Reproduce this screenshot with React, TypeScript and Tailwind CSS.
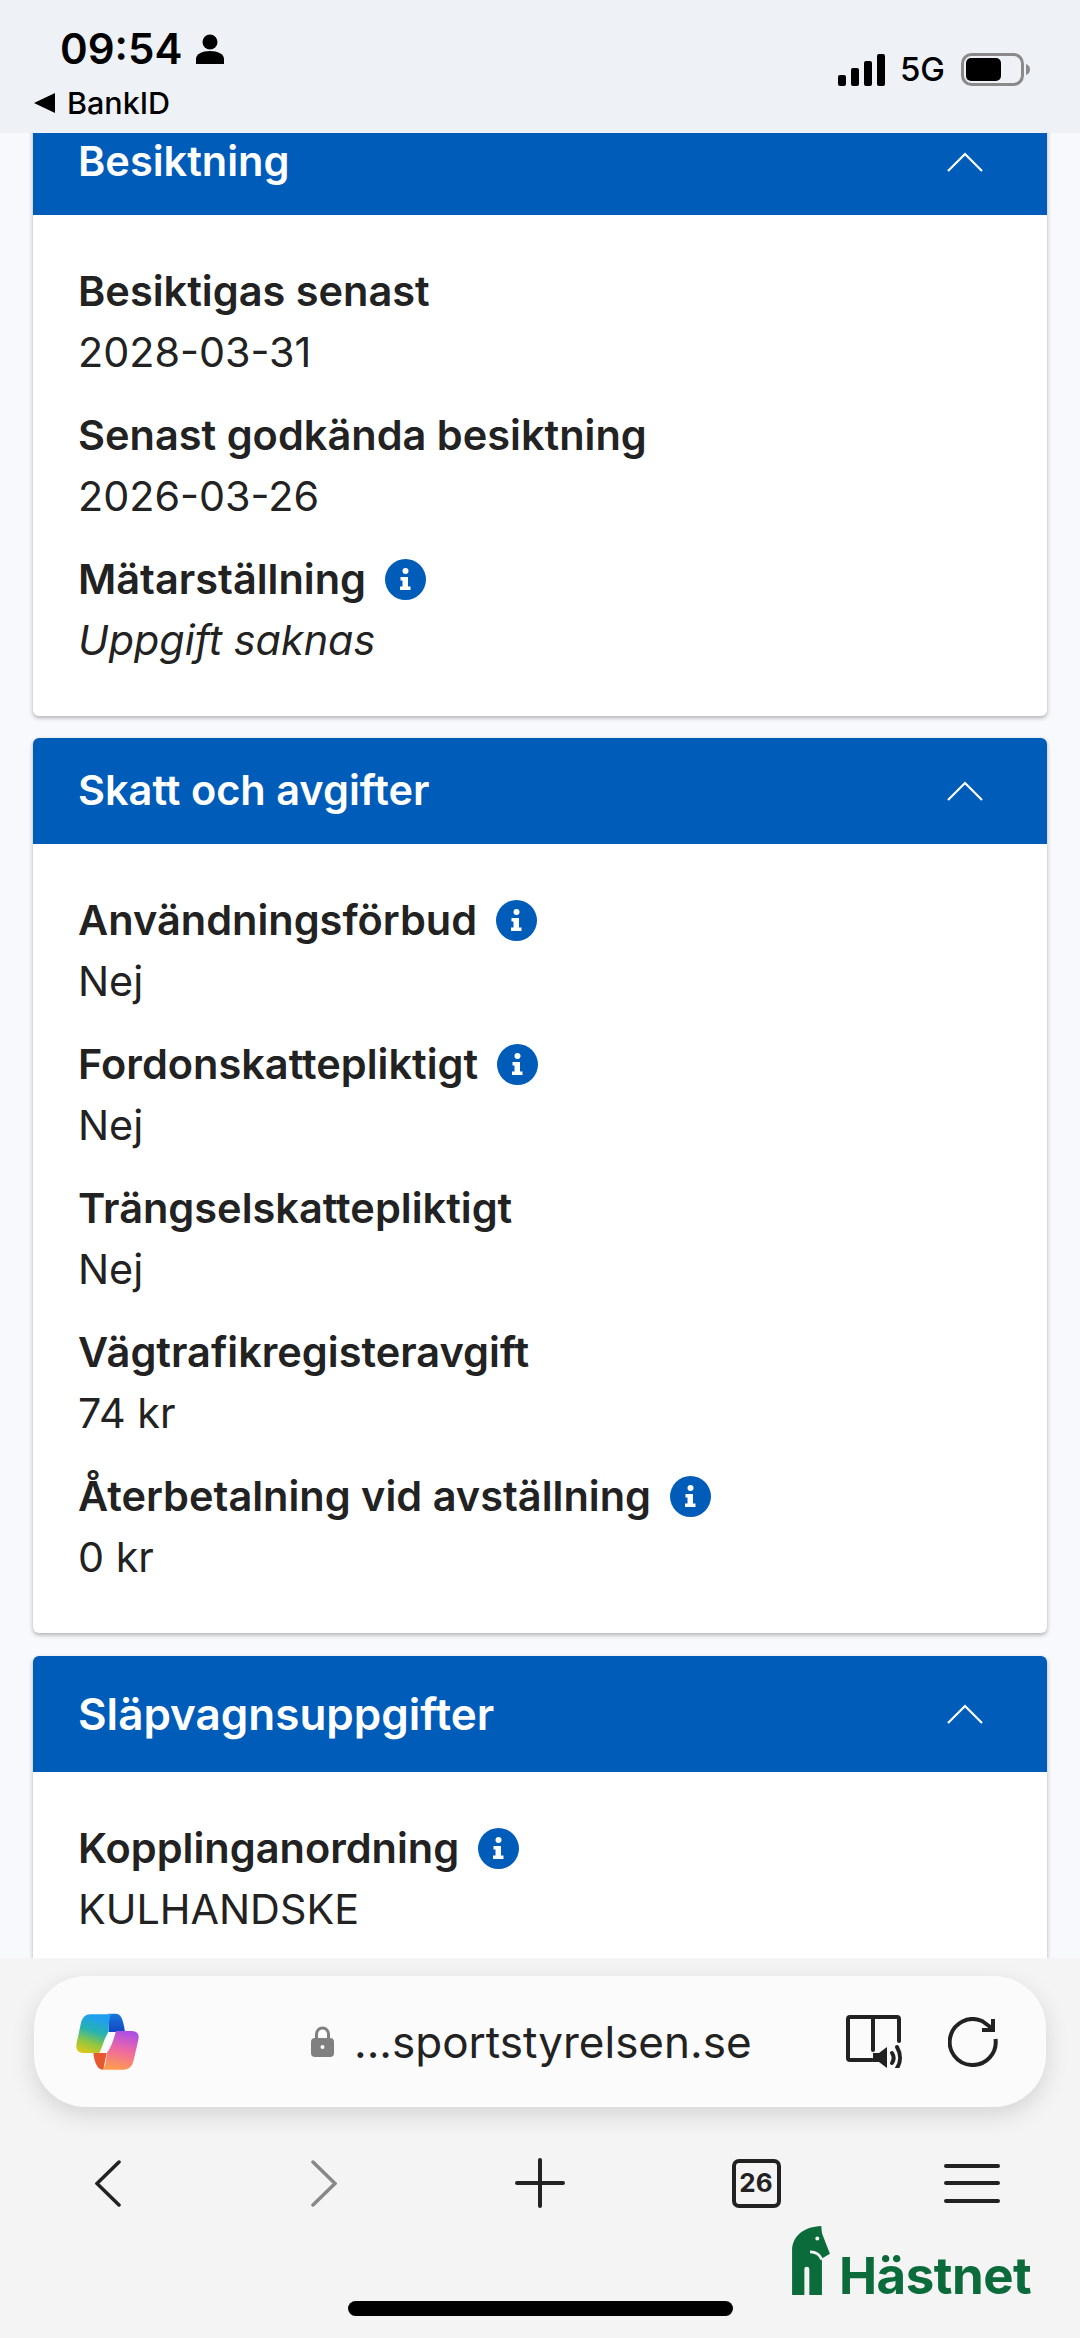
import { type ReactNode } from "react";

const FONT = "[font-family:Inter,'Noto_Sans',sans-serif]";

function InfoIcon() {
  return (
    <svg viewBox="0 0 41 41" className="w-[41px] h-[41px] shrink-0">
      <circle cx="20.5" cy="20.5" r="20.5" fill="#005cb9" />
      <circle cx="20.5" cy="12" r="3" fill="#fff" />
      <path d="M15.5 18h7.5v9.5h2.5v3.5h-10.500v-3.500h2.500v-6h-2z" fill="#fff" />
    </svg>
  );
}

function Chevron() {
  return (
    <svg viewBox="0 0 36 20" className="w-[36px] h-[20px]" fill="none" stroke="#fff" strokeWidth="2.200">
      <path d="M1 19 18 2l17 17" />
    </svg>
  );
}

type Row = { label: string; value: string; info?: boolean; italic?: boolean };

function Card({ title, rows, headerClass, titleClass, className }: { title: string; rows: Row[]; headerClass: string; titleClass: string; className?: string }) {
  return (
    <section className={`mx-[33px] bg-white rounded-[6px] overflow-hidden shadow-[0_2px_4px_rgba(0,0,0,0.3)] ${className ?? ""}`}>
      <header className={`bg-[#005cb9] pl-[45px] pr-[64px] flex items-center justify-between ${headerClass}`}>
        <h2 className={`text-white font-semibold leading-none ${titleClass}`}>{title}</h2>
        <Chevron />
      </header>
      <div className="px-[45px] pt-[46px] pb-[45px] flex flex-col gap-[22px]">
        {rows.map((r) => (
          <div key={r.label}>
            <div className="flex items-center gap-[19px] h-[61px]">
              <span className="text-[#222] text-[41.500px] font-semibold">{r.label}</span>
              {r.info && <InfoIcon />}
            </div>
            <div className={`h-[61px] leading-[61px] text-[#222] text-[41.300px] ${r.italic ? "italic" : ""}`}>{r.value}</div>
          </div>
        ))}
      </div>
    </section>
  );
}

function StatusBar() {
  return (
    <div className="h-[133px] shrink-0 bg-[#eef1f5] flex justify-between pl-[34px] pr-[50px] z-10 relative">
      <div>
        <div className="flex items-center gap-[14px] pl-[26px] pt-[8px] h-[90px]">
          <span className="text-[42px] font-semibold leading-none text-black">09:54</span>
          <svg viewBox="0 0 28 30" className="w-[28px] h-[30px]" fill="#000">
            <circle cx="14" cy="8" r="7.500" />
            <path d="M0 30v-5c0-5 6-8 14-8s14 3 14 8v5z" />
          </svg>
        </div>
        <div className="flex items-center gap-[12px] -mt-[2px]">
          <svg viewBox="0 0 21 20" className="w-[21px] h-[20px]" fill="#000"><path d="M21 0v20L0 10z" /></svg>
          <span className="text-[30.500px] font-medium leading-none text-black">BankID</span>
        </div>
      </div>
      <div className="flex items-center gap-[14px] pt-[3px] h-[136px]">
        <svg viewBox="0 0 48 32" className="w-[48px] h-[32px]" fill="#000">
          <rect x="0" y="21" width="8" height="11" rx="2" />
          <rect x="13" y="14" width="8" height="18" rx="2" />
          <rect x="26" y="7" width="8" height="25" rx="2" />
          <rect x="39" y="0" width="8" height="32" rx="2" />
        </svg>
        <span className="text-[33px] font-medium leading-none text-black">5G</span>
        <svg viewBox="0 0 69 33" className="w-[69px] h-[33px] ml-[2px]">
          <rect x="1.500" y="1.500" width="60" height="30" rx="9" fill="none" stroke="#8a8a8a" strokeWidth="3" />
          <rect x="5" y="5" width="35" height="23" rx="5" fill="#000" />
          <path d="M65 11c3 1 4 3 4 5.500s-1 4.500-4 5.500z" fill="#8a8a8a" />
        </svg>
      </div>
    </div>
  );
}

function CopilotLogo() {
  return (
    <svg viewBox="108 98 192 174" className="w-[64px] h-[58px]">
      <defs>
        <linearGradient id="cpLeft" x1="0.3" y1="0" x2="0" y2="1">
          <stop offset="0" stopColor="#1f9fee" />
          <stop offset="0.35" stopColor="#27b3b0" />
          <stop offset="0.65" stopColor="#8fc642" />
          <stop offset="1" stopColor="#efc812" />
        </linearGradient>
        <linearGradient id="cpRight" x1="0.6" y1="0" x2="0.4" y2="1">
          <stop offset="0" stopColor="#ac4ee6" />
          <stop offset="0.5" stopColor="#ef6aa0" />
          <stop offset="1" stopColor="#ff9b4e" />
        </linearGradient>
        <linearGradient id="cpTop" x1="0" y1="0" x2="0" y2="1">
          <stop offset="0" stopColor="#1a75dc" />
          <stop offset="1" stopColor="#1247c4" />
        </linearGradient>
      </defs>
      <path d="M205 100h22c14 0 22 12 28 55h-27l-22 0z" fill="url(#cpTop)" />
      <path d="M160 218h40l-10 50c-16 0-26-16-30-50z" fill="#e8582f" />
      <path d="M150 102h65c-6 4-9 24-9 52-12 16-18 44-28 64h-48c-18 0-24-14-20-30l12-56c4-20 14-30 28-30z" fill="url(#cpLeft)" />
      <path d="M228 152h47c16 0 24 10 20 26l-14 62c-4 18-14 28-30 28h-62c8-10 10-30 11-50 14-16 22-44 28-66z" fill="url(#cpRight)" />
    </svg>
  );
}

function UrlBar() {
  return (
    <div className="mx-[34px] h-[131px] rounded-[52px] bg-[#fbfbfb] shadow-[0_8px_24px_rgba(0,0,0,0.13)] flex items-center pl-[42px]">
      <CopilotLogo />
      <div className="flex items-center gap-[20px] ml-[171px]">
        <svg viewBox="0 0 23 31" className="w-[23px] h-[31px]">
          <path d="M5.500 13V8a6 6 0 0 1 12 0v5" fill="none" stroke="#808080" strokeWidth="3" />
          <rect x="0" y="12" width="23" height="19" rx="4" fill="#808080" />
          <circle cx="11.500" cy="21" r="2" fill="#fbfbfb" />
        </svg>
        <span className="text-[44px] leading-none text-[#222] whitespace-nowrap">...sportstyrelsen.se</span>
      </div>
      <svg viewBox="0 0 58 53" className="w-[58px] h-[53px] ml-[94px]" fill="none" stroke="#222" strokeWidth="4" strokeLinecap="round">
        <path d="M26 45H4a2 2 0 0 1-2-2V4a2 2 0 0 1 2-2h47a2 2 0 0 1 2 2v22" />
        <path d="M27 2v33" />
        <path d="M27 38h6l8-6v21l-8-6h-6z" fill="#222" stroke="none" />
        <path d="M46 38c2 3 2 7 0 10" />
        <path d="M51 32c4 7 4 15 0 21" />
      </svg>
      <svg viewBox="0 0 50 50" className="w-[50px] h-[50px] ml-[44px]" fill="none" stroke="#222" strokeWidth="4">
        <path d="M47.500 22A23 23 0 1 1 34 4l11 8" />
        <path d="M45 2v11H34" />
      </svg>
    </div>
  );
}

function Toolbar() {
  const items: ReactNode[] = [
    <svg viewBox="0 0 26 47" className="w-[26px] h-[47px]" fill="none" stroke="#222" strokeWidth="3.500" strokeLinecap="round"><path d="M24 2 2 23.500 24 45" /></svg>,
    <svg viewBox="0 0 26 47" className="w-[26px] h-[47px]" fill="none" stroke="#888" strokeWidth="3.500" strokeLinecap="round"><path d="m2 2 22 21.500L2 45" /></svg>,
    <svg viewBox="0 0 50 50" className="w-[50px] h-[50px]" fill="none" stroke="#222" strokeWidth="4" strokeLinecap="round"><path d="M25 2v46M2 25h46" /></svg>,
    <div className="w-[49px] h-[49px] border-[4px] border-[#222] rounded-[7px] flex items-center justify-center text-[26px] font-bold leading-none text-[#222]">26</div>,
    <div className="flex flex-col gap-[13.500px]">
      <div className="w-[56px] h-[4px] bg-[#222] rounded-full" />
      <div className="w-[56px] h-[4px] bg-[#222] rounded-full" />
      <div className="w-[56px] h-[4px] bg-[#222] rounded-full" />
    </div>,
  ];
  return (
    <div className="grid grid-cols-5 h-[50px] mt-[51px]">
      {items.map((it, i) => (
        <div key={i} className="flex items-center justify-center">{it}</div>
      ))}
    </div>
  );
}

function Hastnet() {
  return (
    <div className="absolute left-[792px] top-[268px] flex items-end gap-[9px]">
      <svg viewBox="96 138 114 208" className="w-[38px] h-[69px]">
        <path d="M96 346V212c0-44 36-72 88-74l2 22 24 62-24 14v110h-38V268a7.500 7.500 0 0 0-15 0v78z" fill="#0b6b3a" />
        <circle cx="172" cy="176" r="6" fill="#f4f4f5" />
        <path d="M150 216c18 0 30 8 36 24" fill="none" stroke="#f4f4f5" strokeWidth="8" />
      </svg>
      <span className="text-[51px] font-bold leading-[38px] text-[#0b6b3a] tracking-[-0.5px]">Hästnet</span>
    </div>
  );
}

export default function App() {
  return (
    <div className={`w-[1080px] h-[2338px] flex flex-col overflow-hidden bg-[#f8f9fc] ${FONT}`}>
      <StatusBar />
      <main className="flex-1 min-h-0 overflow-hidden flex flex-col gap-[22px]">
        <Card
          title="Besiktning"
          headerClass="h-[106px]"
          titleClass="text-[41.500px]"
          className="-mt-[24px] shrink-0"
          rows={[
            { label: "Besiktigas senast", value: "2028-03-31" },
            { label: "Senast godkända besiktning", value: "2026-03-26" },
            { label: "Mätarställning", value: "Uppgift saknas", info: true, italic: true },
          ]}
        />
        <Card
          title="Skatt och avgifter"
          headerClass="h-[106px]"
          titleClass="text-[41.500px]"
          className="shrink-0"
          rows={[
            { label: "Användningsförbud", value: "Nej", info: true },
            { label: "Fordonskattepliktigt", value: "Nej", info: true },
            { label: "Trängselskattepliktigt", value: "Nej" },
            { label: "Vägtrafikregisteravgift", value: "74 kr" },
            { label: "Återbetalning vid avställning", value: "0 kr", info: true },
          ]}
        />
        <Card
          title="Släpvagnsuppgifter"
          headerClass="h-[116px]"
          titleClass="text-[44px]"
          className="shrink-0 mt-[1px]"
          rows={[{ label: "Kopplinganordning", value: "KULHANDSKE", info: true }]}
        />
      </main>
      <footer className="relative h-[380px] shrink-0 bg-[#f4f4f5] pt-[18px]">
        <UrlBar />
        <Toolbar />
        <Hastnet />
        <div className="w-[385px] h-[15px] bg-black rounded-full mx-auto mt-[93px]" />
      </footer>
    </div>
  );
}
